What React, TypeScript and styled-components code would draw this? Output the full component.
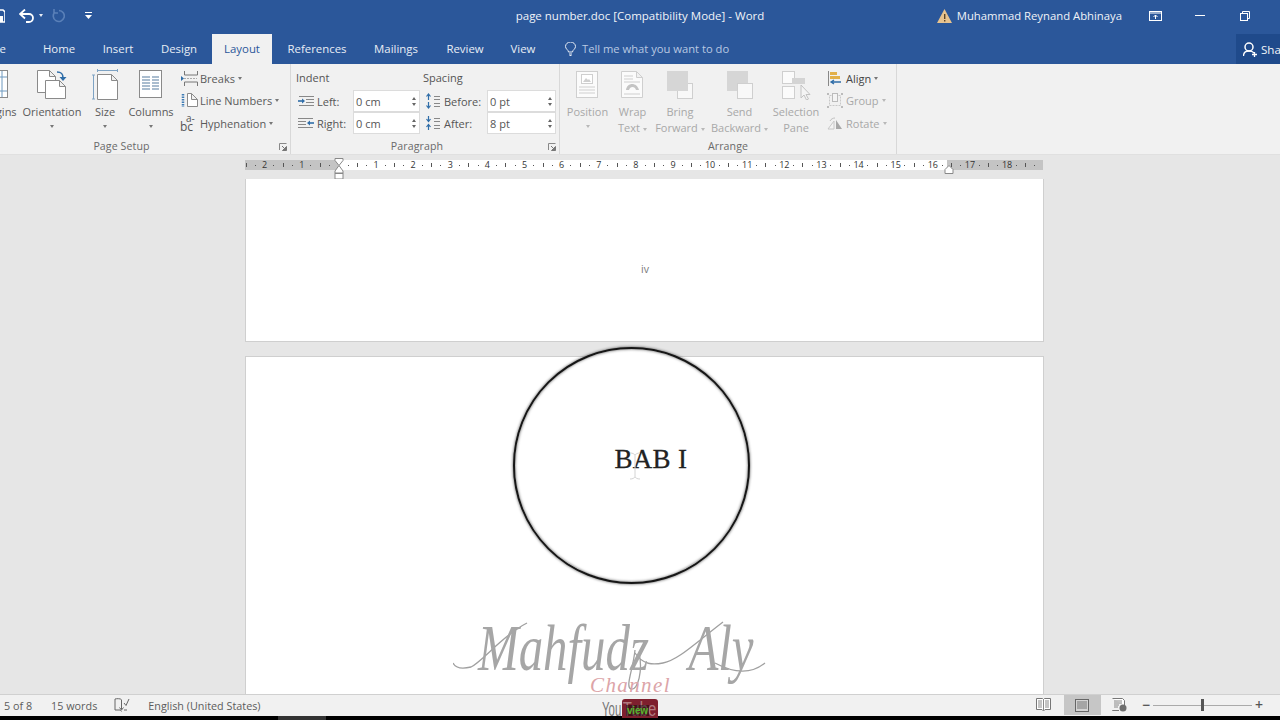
import { ReactNode } from "react";
import styled, { createGlobalStyle } from "styled-components";

const GlobalStyle = createGlobalStyle`
  html, body {
    margin: 0;
    padding: 0;
    width: 1280px;
    height: 720px;
    overflow: hidden;
    background: #000;
    font-family: "Open Sans", "Noto Sans", sans-serif;
  }
  * { box-sizing: border-box; }
`;

const BLUE = "#2b579a";

const Window = styled.div`
  width: 1280px;
  height: 720px;
  display: flex;
  flex-direction: column;
  overflow: hidden;
  position: relative;
`;

/* title bar */
const TitleBar = styled.div`
  height: 34px;
  flex: none;
  background: ${BLUE};
  display: grid;
  grid-template-columns: 1fr auto 1fr;
  align-items: center;
  padding-bottom: 3px;
  color: #fff;
  font-size: 12px;
`;

const QuickAccess = styled.div`
  display: flex;
  align-items: center;
  margin-left: -9px;
`;

const QuickButton = styled.div<{ $w: number; $ml?: number }>`
  width: ${(p) => p.$w}px;
  margin-left: ${(p) => p.$ml ?? 0}px;
  display: flex;
  align-items: center;
  justify-content: center;
`;

const DocTitle = styled.div`
  color: #f0f3f8;
  font-size: 11.5px;
`;

const TitleRight = styled.div`
  display: flex;
  align-items: center;
  justify-content: flex-end;
`;

const UserName = styled.span`
  margin-left: 5px;
  margin-right: 26px;
  font-size: 11.3px;
  color: #f0f3f8;
`;

const WinButton = styled.div<{ $w: number }>`
  width: ${(p) => p.$w}px;
  display: flex;
  justify-content: center;
`;

/* tab row */
const TabRow = styled.div`
  height: 30px;
  flex: none;
  background: ${BLUE};
  display: flex;
  align-items: stretch;
`;

const Tab = styled.div<{ $w: number; $active?: boolean }>`
  width: ${(p) => p.$w}px;
  flex: none;
  display: flex;
  align-items: center;
  justify-content: center;
  font-size: 11.4px;
  padding-bottom: 1px;
  color: ${(p) => (p.$active ? BLUE : "#e8edf5")};
  background: ${(p) => (p.$active ? "#f1f1f1" : "transparent")};
`;

const FileTab = styled(Tab)`
  margin-left: -34px;
`;

const TellMe = styled.div`
  margin-left: 19px;
  display: flex;
  align-items: center;
  gap: 6px;
  font-size: 11.2px;
  padding-bottom: 1px;
  color: #b9c9e2;
`;

const ShareBox = styled.div`
  margin-left: auto;
  width: 44px;
  background: #1f4a8b;
  color: #f0f3f8;
  display: flex;
  align-items: center;
  gap: 4px;
  padding-left: 7px;
  font-size: 11.6px;
  overflow: hidden;
`;

/* ribbon */
const Ribbon = styled.div`
  height: 91px;
  flex: none;
  background: #f1f1f1;
  border-bottom: 1px solid #e0e0e0;
  display: flex;
  color: #555;
  font-size: 11px;
`;

const Group = styled.div<{ $w: number; $ml?: number }>`
  width: ${(p) => p.$w}px;
  margin-left: ${(p) => p.$ml ?? 0}px;
  flex: none;
  height: 90px;
  border-right: 1px solid #d8d8d8;
  display: flex;
  flex-direction: column;
  position: relative;
`;

const GroupBody = styled.div<{ $pl?: number }>`
  flex: 1;
  display: flex;
  min-height: 0;
  padding-left: ${(p) => p.$pl ?? 0}px;
`;

const GroupLabel = styled.div<{ $pr?: number }>`
  height: 15px;
  flex: none;
  text-align: center;
  font-size: 10.6px;
  line-height: 14px;
  letter-spacing: 0.1px;
  padding-right: ${(p) => p.$pr ?? 0}px;
  color: #6a6a6a;
`;

const Launcher = styled.svg`
  position: absolute;
  right: 3px;
  bottom: 3px;
`;

const BigButton = styled.div<{ $w: number; $off?: boolean }>`
  width: ${(p) => p.$w}px;
  flex: none;
  display: flex;
  flex-direction: column;
  align-items: center;
  padding-top: 5px;
  color: ${(p) => (p.$off ? "#a8a8a8" : "#5a5a5a")};
  line-height: 16px;
  white-space: nowrap;
`;

const BigIcon = styled.div`
  height: 32px;
  display: flex;
  align-items: center;
  justify-content: center;
  margin-bottom: 3px;
`;

const Caret = styled.span<{ $off?: boolean; $ml?: number; $color?: string }>`
  display: inline-block;
  flex: none;
  width: 0;
  height: 0;
  border-left: 2.5px solid transparent;
  border-right: 2.5px solid transparent;
  border-top: 3px solid ${(p) => p.$color ?? (p.$off ? "#b8b8b8" : "#777")};
  vertical-align: middle;
  margin-left: ${(p) => p.$ml ?? 3}px;
`;

const CaretRow = styled.div`
  height: 12px;
  display: flex;
  align-items: center;
  justify-content: center;
`;

const SmallColumn = styled.div<{ $ml: number }>`
  margin-left: ${(p) => p.$ml}px;
  display: flex;
  flex-direction: column;
  padding-top: 3px;
`;

const SmallButton = styled.div<{ $off?: boolean; $dark?: boolean }>`
  height: 22.5px;
  display: flex;
  align-items: center;
  gap: 2px;
  white-space: nowrap;
  color: ${(p) => (p.$dark ? "#444" : p.$off ? "#a8a8a8" : "#5a5a5a")};
`;

const SmallIcon = styled.div`
  width: 18px;
  display: flex;
  justify-content: center;
`;

/* paragraph group */
const ParaGrid = styled.div`
  display: grid;
  grid-template-columns: 127px 133px;
  align-content: start;
  padding: 5px 0 0 5px;
`;

const ParaHead = styled.div`
  height: 21px;
  font-size: 11px;
  color: #555;
  line-height: 17px;
`;

const SpinRow = styled.div`
  height: 22px;
  display: flex;
  align-items: center;
  font-size: 11px;
  color: #555;
`;

const SpinLabel = styled.div<{ $w: number }>`
  width: ${(p) => p.$w}px;
  flex: none;
  display: flex;
  align-items: center;
  gap: 3px;
  padding-left: 2px;
`;

const SpinBox = styled.div<{ $w: number }>`
  width: ${(p) => p.$w}px;
  height: 22px;
  flex: none;
  background: #fff;
  border: 1px solid #dcdcdc;
  display: flex;
  align-items: center;
  justify-content: space-between;
  padding: 0 3px 0 2px;
  font-size: 11px;
  color: #555;
`;

const SpinArrows = styled.div`
  display: flex;
  flex-direction: column;
  gap: 3px;
`;

const Arrow = styled.span<{ $down?: boolean }>`
  display: block;
  width: 0;
  height: 0;
  border-left: 2.5px solid transparent;
  border-right: 2.5px solid transparent;
  ${(p) => (p.$down ? "border-top: 3px solid #666;" : "border-bottom: 3px solid #666;")}
`;

/* ruler */
const RulerBand = styled.div`
  height: 24px;
  flex: none;
  background: #e6e6e6;
  padding: 5px 0 0 245px;
`;

const Ruler = styled.div`
  width: 798px;
  height: 10px;
  position: relative;
  background: linear-gradient(
    to right,
    #c4c4c4 0,
    #c4c4c4 93px,
    #fff 93px,
    #fff 702px,
    #c4c4c4 702px
  );
`;

const RulerClip = styled.div`
  width: 100%;
  height: 100%;
  overflow-x: clip;
`;

const RulerStrip = styled.div`
  display: flex;
  height: 100%;
  margin-left: -22.2px;
  width: 900px;
`;

const RulerMark = styled.div`
  width: 9.29px;
  flex: none;
  display: flex;
  align-items: center;
  justify-content: center;
  font-size: 9px;
  color: #333;
  line-height: 10px;
`;

const Tick = styled.span<{ $tall?: boolean }>`
  display: block;
  width: 1px;
  height: ${(p) => (p.$tall ? 4 : 1)}px;
  background: #555;
`;

const IndentMarker = styled.svg`
  position: absolute;
  left: 89px;
  top: -2px;
`;

const RightMarker = styled.svg`
  position: absolute;
  left: 699px;
  top: 5px;
`;

/* document */
const DocArea = styled.div`
  flex: 1;
  min-height: 0;
  background: #e6e6e6;
  display: flex;
  flex-direction: column;
  gap: 14px;
  padding-left: 245px;
  overflow: hidden;
  position: relative;
`;

const PageTop = styled.div`
  flex: none;
  width: 799px;
  height: 163px;
  background: #fff;
  border: 1px solid #cfcfcf;
  border-top: none;
  padding-top: 83px;
  padding-left: 395px;
  font-size: 10.5px;
  line-height: 14px;
  color: #777;
`;

const PageMain = styled.div`
  flex: 1;
  width: 799px;
  background: #fff;
  border: 1px solid #cfcfcf;
  border-bottom: none;
`;

const Circle = styled.div`
  position: absolute;
  left: 513px;
  top: 168px;
  width: 237px;
  height: 237px;
  border-radius: 50%;
  border: 2.5px solid #161616;
  background: #fff;
  box-shadow: 0 0 3px #444, inset 0 0 3px #555;
`;

const ChapterTitle = styled.div`
  margin: 95px 0 0 99.5px;
  font-family: "Liberation Serif", serif;
  font-size: 27px;
  line-height: 30px;
  letter-spacing: 0.3px;
  -webkit-text-stroke: 0.3px #222;
  color: #222;
  white-space: nowrap;
`;

const TextCursor = styled.svg`
  position: absolute;
  left: 114px;
  top: 103px;
`;

const Watermark = styled.div`
  position: absolute;
  left: 453px;
  top: 436px;
  width: 314px;
  height: 80px;
`;

const WatermarkName = styled.div`
  position: absolute;
  left: 25px;
  top: 0;
  font-family: "Liberation Serif", serif;
  font-style: italic;
  font-size: 66px;
  line-height: 66px;
  word-spacing: 38px;
  color: #a6a6a6;
  white-space: nowrap;
  transform: scaleX(0.74);
  transform-origin: left top;
`;

const Swash = styled.svg`
  position: absolute;
  left: 0;
  top: 0;
`;

const WatermarkSub = styled.div`
  position: absolute;
  left: 137px;
  top: 59px;
  font-family: "Liberation Serif", serif;
  font-style: italic;
  font-size: 21px;
  line-height: 22px;
  letter-spacing: 1.4px;
  color: #dca4a8;
`;

/* status bar */
const StatusBar = styled.div`
  height: 22px;
  flex: none;
  background: #f1f1f1;
  border-top: 1px solid #d0d0d0;
  display: flex;
  align-items: center;
  padding-bottom: 1px;
  font-size: 10.8px;
  color: #5c5c5c;
`;

const StatusText = styled.span<{ $ml: number }>`
  margin-left: ${(p) => p.$ml}px;
  white-space: nowrap;
`;

const StatusIcon = styled.div<{ $ml: number; $w: number; $active?: boolean }>`
  margin-left: ${(p) => p.$ml}px;
  width: ${(p) => p.$w}px;
  align-self: stretch;
  display: flex;
  align-items: center;
  justify-content: center;
  background: ${(p) => (p.$active ? "#c6c6c6" : "transparent")};
`;

const ViewGroup = styled.div`
  margin-left: auto;
  display: flex;
  align-self: stretch;
  align-items: center;
`;

const ZoomTrack = styled.div`
  width: 99px;
  height: 1px;
  background: #aaa;
  margin: 0 3px;
  position: relative;
`;

const ZoomThumb = styled.div`
  position: absolute;
  left: 48px;
  top: -6px;
  width: 3px;
  height: 12px;
  background: #555;
`;

const ZoomSign = styled.div<{ $mr?: number; $ml?: number }>`
  font-size: 14px;
  font-weight: 600;
  line-height: 14px;
  color: #555;
  margin-left: ${(p) => p.$ml ?? 0}px;
  margin-right: ${(p) => p.$mr ?? 0}px;
`;

const BottomBand = styled.div`
  height: 4px;
  flex: none;
  background: #000;
  display: flex;
`;

const BandGrey = styled.div`
  margin-left: 278px;
  width: 48px;
  background: #333;
`;

const Logo = styled.div`
  position: absolute;
  left: 602px;
  top: 699px;
  height: 19px;
  overflow: hidden;
  display: flex;
  align-items: flex-start;
  font-family: "Liberation Sans", sans-serif;
  font-size: 20px;
  line-height: 20px;
  color: #777;
`;

const LogoYou = styled.span`
  width: 20px;
  display: block;
  transform: scaleX(0.57);
  transform-origin: left top;
`;

const LogoBox = styled.span`
  position: relative;
  width: 36px;
  height: 19px;
  background: #7e1f2e;
  border-radius: 3px 3px 0 0;
  color: #b07a80;
  overflow: hidden;
`;

const LogoTube = styled.span`
  display: block;
  padding-left: 1px;
  transform: scaleX(0.75);
  transform-origin: left top;
`;

const LogoOver = styled.span`
  position: absolute;
  left: 4px;
  top: 6px;
  padding: 0 1px;
  color: #58b52e;
  background: rgba(0, 0, 0, 0.45);
  font-size: 10px;
  font-weight: 700;
  line-height: 11px;
  letter-spacing: -0.2px;
`;

/* icons */
const G = "#8a8a8a";
const LG = "#cfcfcf";

const PageSheet = ({ x, y, w, h, stroke = G }: { x: number; y: number; w: number; h: number; stroke?: string }) => (
  <path
    d={`M${x} ${y}h${w - 6}l6 6v${h - 6}h-${w}z M${x + w - 6} ${y}v6h6`}
    fill="#fff"
    stroke={stroke}
  />
);

const OrientationIcon = () => (
  <svg width="32" height="32" viewBox="0 0 32 32">
    <PageSheet x={1.5} y={1.5} w={18} h={22} />
    <PageSheet x={9.5} y={11.5} w={20} h={18} />
    <path d="M21 3c4 0 6 1 6 6" fill="none" stroke="#2f6da8" strokeWidth="1.6" />
    <path d="M23.5 8h7l-3.5 4z" fill="#2f6da8" />
  </svg>
);

const SizeIcon = () => (
  <svg width="26" height="32" viewBox="0 0 26 32">
    <path d="M5.5 1.500h20M5.500 0v3M25.500 0v3M1.500 6v24M0 6h3M0 30h3" stroke="#7ea3c4" fill="none" />
    <PageSheet x={5.5} y={5.5} w={20} h={25} />
  </svg>
);

const ColumnsIcon = () => (
  <svg width="24" height="30" viewBox="0 0 24 30">
    <rect x="0.5" y="0.5" width="22" height="27" fill="#fff" stroke={G} />
    <path
      d="M3 7h8M13 7h7M3 10h8M13 10h7M3 13h8M13 13h7M3 16h8M13 16h7M3 19h8M13 19h7"
      stroke="#8fa8c0"
      strokeWidth="1.3"
    />
  </svg>
);

const MarginsIcon = () => (
  <svg width="26" height="30" viewBox="0 0 26 30">
    <rect x="0.5" y="0.5" width="24" height="27" fill="#fff" stroke={G} />
    <path d="M5 1v26M19 1v26M1 7h23M1 21h23" stroke="#6f9ac0" />
  </svg>
);

const BreaksIcon = () => (
  <svg width="17" height="15" viewBox="0 0 17 15">
    <path d="M3.500 0v4h13V0M3.500 15v-4h13v4" fill="none" stroke="#777" />
    <path d="M0 5l3 2.500L0 10z" fill="#2f6da8" />
    <path d="M3 7.500h13" stroke="#aaa" strokeDasharray="2 1" />
  </svg>
);

const LineNumbersIcon = () => (
  <svg width="17" height="15" viewBox="0 0 17 15">
    <PageSheet x={6.5} y={0.5} w={10} h={13} />
    <path d="M2 1v13" stroke="#3f7cb5" strokeWidth="2.5" strokeDasharray="1.5 1" />
  </svg>
);

const HyphenIcon = () => (
  <svg width="18" height="20" viewBox="0 0 18 20">
    <text x="6" y="9" fontSize="10" fill="#555" fontFamily="Open Sans">a-</text>
    <text x="0" y="18" fontSize="12" fill="#555" fontFamily="Open Sans">bc</text>
  </svg>
);

const IndentIcon = ({ right }: { right?: boolean }) => (
  <svg width="16" height="11" viewBox="0 0 16 11">
    <g transform={right ? "translate(16 0) scale(-1 1)" : undefined}>
      <path d="M1 0.500h15M8 3.500h8M8 6.500h8M1 9.500h15" stroke="#888" />
      <path d="M0 5h5" stroke="#2f6da8" strokeWidth="1.6" />
      <path d="M4 2.500l3 2.500l-3 2.500z" fill="#2f6da8" />
    </g>
  </svg>
);

const SpacingIcon = ({ after }: { after?: boolean }) => (
  <svg width="16" height="16" viewBox="0 0 16 16">
    <path d="M9 3.500h6M9 6.500h6M9 10.500h6M9 13.500h6" stroke="#888" />
    <path
      d={after ? "M3.500 1v5M1.500 4l2 2.500l2-2.500M3.500 15v-5M1.500 12l2-2.500l2 2.500" : "M3.500 7V1.500M1.500 3.500l2-2.500l2 2.500M3.500 9v5.500M1.500 12.500l2 2.500l2-2.500"}
      stroke="#2f6da8"
      fill="none"
      strokeWidth="1.2"
    />
  </svg>
);

const PositionIcon = () => (
  <svg width="24" height="28" viewBox="0 0 24 28">
    <rect x="0.5" y="0.5" width="21" height="26" fill="#fbfbfb" stroke={LG} />
    <rect x="5.5" y="3.5" width="11" height="9" fill="#fff" stroke={LG} />
    <path d="M7 11l3-4l2 2l1-1l2 3z" fill={LG} />
    <path d="M3 16h16M3 19h16M3 22h16" stroke={LG} />
  </svg>
);

const WrapIcon = () => (
  <svg width="23" height="28" viewBox="0 0 23 28">
    <path d="M0.500 0.500h15l6 6v20h-21zM15.500 0.500v6h6" fill="#fbfbfb" stroke={LG} />
    <path d="M3 5h9M3 8h9M3 23h16M3 11h16" stroke={LG} />
    <path d="M5 19c1-8 11-8 13 0h-3c-1-4-6-4-7 0z" fill="#c4c4c4" />
  </svg>
);

const LayerIcon = ({ back }: { back?: boolean }) => (
  <svg width="26" height="28" viewBox="0 0 26 28">
    {back ? (
      <>
        <rect x="0" y="0" width="21" height="20" fill="#d6d6d6" />
        <rect x="10.5" y="12.5" width="15" height="15" fill="#f8f8f8" stroke="#cfcfcf" />
      </>
    ) : (
      <>
        <rect x="10.5" y="12.5" width="15" height="15" fill="#f8f8f8" stroke="#cfcfcf" />
        <rect x="0" y="0" width="21" height="20" fill="#d6d6d6" />
      </>
    )}
  </svg>
);

const PaneIcon = () => (
  <svg width="29" height="29" viewBox="0 0 29 29">
    <rect x="0.5" y="0.5" width="12" height="12" fill="#fbfbfb" stroke={LG} />
    <rect x="0.5" y="15.5" width="12" height="12" fill="#fbfbfb" stroke={LG} />
    <rect x="10" y="7" width="13" height="6" fill="#d4d4d4" />
    <path d="M19 14v13l3-3l2.500 5l2-1l-2.500-4.500h4z" fill="#f4f4f4" stroke="#c2c2c2" />
  </svg>
);

const AlignIcon = () => (
  <svg width="16" height="15" viewBox="0 0 16 15">
    <path d="M1.500 0v15" stroke="#888" />
    <rect x="3" y="1" width="7" height="3" fill="#e2b04a" />
    <rect x="3" y="5" width="10" height="3" fill="#e2b04a" />
    <path d="M14 11H5M7 9l-3 2l3 2" fill="none" stroke="#2f6da8" strokeWidth="1.3" />
  </svg>
);

const GroupIcon = () => (
  <svg width="16" height="15" viewBox="0 0 16 15">
    <rect x="2.5" y="2.5" width="11" height="10" fill="none" stroke="#c8c8c8" strokeDasharray="2 1" />
    <rect x="5.5" y="0.5" width="5" height="8" fill="#f4f4f4" stroke="#bbb" />
    <rect x="0" y="0" width="2" height="2" fill="#bbb" />
    <rect x="14" y="0" width="2" height="2" fill="#bbb" />
    <rect x="0" y="13" width="2" height="2" fill="#bbb" />
    <rect x="14" y="13" width="2" height="2" fill="#bbb" />
  </svg>
);

const RotateIcon = () => (
  <svg width="16" height="15" viewBox="0 0 16 15">
    <path d="M7 13H1l6-8z" fill="#f4f4f4" stroke="#c8c8c8" />
    <path d="M9 13h6l-6-9z" fill="#a8a8a8" />
    <path d="M3 5c1-2 3-3 5-3" fill="none" stroke="#c0c0c0" />
  </svg>
);

const LauncherIcon = () => (
  <Launcher width="8" height="8" viewBox="0 0 8 8">
    <path d="M0.500 7V0.500H7.500" fill="none" stroke="#888" />
    <path d="M3 3l3.500 3.500M7.500 3.500v4h-4z" stroke="#777" fill="#777" />
  </Launcher>
);

const ReadIcon = () => (
  <svg width="15" height="14" viewBox="0 0 15 14">
    <path d="M0.500 0.500h6l1 1l1-1h6v11h-5.500l-1.500 1.500l-1.500-1.500h-5.500z" fill="#fff" stroke="#777" />
    <path d="M7.500 1.500v11M2 3h4M2 5h4M2 7h4M2 9h4M9 3h4M9 5h4M9 7h4M9 9h4" stroke="#888" />
  </svg>
);

const PrintIcon = () => (
  <svg width="14" height="13" viewBox="0 0 14 13">
    <rect x="0.5" y="0.5" width="13" height="12" fill="#d4d4d4" stroke="#666" />
    <path d="M2 3h10M2 5h10M2 7h10M2 9h10" stroke="#777" />
  </svg>
);

const WebIcon = () => (
  <svg width="15" height="14" viewBox="0 0 15 14">
    <path d="M0.500 0.500h10l2 2v5M7 12.500H0.500z" fill="#fff" stroke="#777" />
    <path d="M2 3h8M2 5h8M2 7h5M2 9h4" stroke="#888" />
    <circle cx="11" cy="10" r="3.5" fill="#6f6f6f" />
  </svg>
);

const ProofIcon = () => (
  <svg width="16" height="14" viewBox="0 0 16 14">
    <path d="M7.500 1.500C6 0.500 3 0.500 1 1v11h5.500l1 1.500" fill="none" stroke="#666" />
    <path d="M7.500 2v9M5.500 9.500l2 2.500l2-2.500" fill="none" stroke="#666" />
    <path d="M10 5l2 2.500L15 1" fill="none" stroke="#666" />
    <path d="M10 12h3" stroke="#666" />
  </svg>
);

const rulerNumbers = [3, 2, 1, 0, ...Array.from({ length: 18 }, (_, i) => i + 1), -1];

const RulerCell = ({ n }: { n: number }) => (
  <>
    <RulerMark>{n > 0 ? n : null}</RulerMark>
    <RulerMark>
      <Tick />
    </RulerMark>
    <RulerMark>
      <Tick $tall />
    </RulerMark>
    <RulerMark>
      <Tick />
    </RulerMark>
  </>
);

const Spin = ({ value, w }: { value: string; w: number }) => (
  <SpinBox $w={w}>
    {value}
    <SpinArrows>
      <Arrow />
      <Arrow $down />
    </SpinArrows>
  </SpinBox>
);

const Big = ({
  w,
  icon,
  lines,
  off,
  caretInline,
  caretBelow,
}: {
  w: number;
  icon: ReactNode;
  lines: string[];
  off?: boolean;
  caretInline?: boolean;
  caretBelow?: boolean;
}) => (
  <BigButton $w={w} $off={off}>
    <BigIcon>{icon}</BigIcon>
    {lines.map((line, i) => (
      <div key={line}>
        {line}
        {caretInline && i === lines.length - 1 && <Caret $off={off} />}
      </div>
    ))}
    {caretBelow && (
      <CaretRow>
        <Caret $off={off} $ml={0} />
      </CaretRow>
    )}
  </BigButton>
);

export default function App() {
  return (
    <Window>
      <GlobalStyle />
      <TitleBar>
        <QuickAccess>
          <QuickButton $w={16}>
            <svg width="11" height="14" viewBox="0 0 11 14">
              <path d="M0 1h9l2 2v10H0z" fill="none" stroke="#fff" strokeWidth="1.6" />
              <rect x="2" y="7" width="7" height="6" fill="#fff" />
            </svg>
          </QuickButton>
          <QuickButton $w={24} $ml={8}>
            <svg width="16" height="14" viewBox="0 0 16 14">
              <path d="M2 5h8a4 4 0 0 1 0 8H7" fill="none" stroke="#fff" strokeWidth="1.8" />
              <path d="M6 0.500L1 5l5 4.500" fill="none" stroke="#fff" strokeWidth="1.8" />
            </svg>
          </QuickButton>
          <Caret $ml={0} $color="#e8edf5" />
          <QuickButton $w={30}>
            <svg width="14" height="14" viewBox="0 0 14 14">
              <path d="M4 3a5.500 5.500 0 1 0 4-1.500M3 0v4h4" fill="none" stroke="#5a80b8" strokeWidth="1.6" />
            </svg>
          </QuickButton>
          <QuickButton $w={30}>
            <svg width="7" height="7" viewBox="0 0 7 7">
              <path d="M0 0h7v1H0zM0 3h7L3.500 7z" fill="#fff" />
            </svg>
          </QuickButton>
        </QuickAccess>
        <DocTitle>page number.doc [Compatibility Mode] - Word</DocTitle>
        <TitleRight>
          <svg width="15" height="14" viewBox="0 0 15 14">
            <path d="M7.500 0L15 14H0z" fill="#e8c38e" />
            <path d="M7 5h1.400v5H7zM7 11h1.400v1.500H7z" fill="#5a4326" />
          </svg>
          <UserName>Muhammad Reynand Abhinaya</UserName>
          <WinButton $w={14}>
            <svg width="13" height="10" viewBox="0 0 13 10">
              <rect x="0.5" y="0.5" width="12" height="9" fill="none" stroke="#fff" />
              <path d="M0 2h13" stroke="#fff" />
              <path d="M6.500 8V4M4.500 6l2-2l2 2" fill="none" stroke="#fff" />
            </svg>
          </WinButton>
          <WinButton $w={76}>
            <svg width="10" height="1" viewBox="0 0 10 1">
              <rect width="10" height="1" fill="#fff" />
            </svg>
          </WinButton>
          <WinButton $w={14}>
            <svg width="10" height="10" viewBox="0 0 10 10">
              <path d="M2.500 2.500V0.500h7v7h-2" fill="none" stroke="#fff" />
              <rect x="0.5" y="2.5" width="7" height="7" fill="none" stroke="#fff" />
            </svg>
          </WinButton>
          <WinButton $w={28} />
        </TitleRight>
      </TitleBar>

      <TabRow>
        <FileTab $w={62}>File</FileTab>
        <Tab $w={62}>Home</Tab>
        <Tab $w={56}>Insert</Tab>
        <Tab $w={66}>Design</Tab>
        <Tab $w={60} $active>
          Layout
        </Tab>
        <Tab $w={90}>References</Tab>
        <Tab $w={68}>Mailings</Tab>
        <Tab $w={70}>Review</Tab>
        <Tab $w={46}>View</Tab>
        <TellMe>
          <svg width="11" height="14" viewBox="0 0 11 14">
            <path d="M3.500 10c0-2-3-3-3-5.500a5 4.500 0 0 1 10 0c0 2.500-3 3.500-3 5.500zM4 12h3M4.500 13.500h2" fill="none" stroke="#e8edf5" />
          </svg>
          Tell me what you want to do
        </TellMe>
        <ShareBox>
          <svg width="14" height="15" viewBox="0 0 14 15" style={{ flex: "none" }}>
            <circle cx="6" cy="5" r="4" fill="none" stroke="#fff" strokeWidth="1.5" />
            <path d="M0.500 14c0-3 2-5 5.500-5s4 1 5 2M9 12.500h5M11.500 10v5" fill="none" stroke="#fff" strokeWidth="1.3" />
          </svg>
          Share
        </ShareBox>
      </TabRow>

      <Ribbon>
        <Group $w={338} $ml={-47}>
          <GroupBody $pl={17}>
            <Big w={52} icon={<MarginsIcon />} lines={["Margins"]} />
            <Big w={60} icon={<OrientationIcon />} lines={["Orientation"]} caretBelow />
            <Big w={46} icon={<SizeIcon />} lines={["Size"]} caretBelow />
            <Big w={46} icon={<ColumnsIcon />} lines={["Columns"]} caretBelow />
            <SmallColumn $ml={6}>
              <SmallButton>
                <SmallIcon>
                  <BreaksIcon />
                </SmallIcon>
                Breaks
                <Caret $ml={1} />
              </SmallButton>
              <SmallButton>
                <SmallIcon>
                  <LineNumbersIcon />
                </SmallIcon>
                Line Numbers
                <Caret $ml={1} />
              </SmallButton>
              <SmallButton>
                <SmallIcon>
                  <HyphenIcon />
                </SmallIcon>
                Hyphenation
                <Caret $ml={1} />
              </SmallButton>
            </SmallColumn>
          </GroupBody>
          <GroupLabel>Page Setup</GroupLabel>
          <LauncherIcon />
        </Group>

        <Group $w={269}>
          <GroupBody>
            <ParaGrid>
              <ParaHead>Indent</ParaHead>
              <ParaHead>Spacing</ParaHead>
              <SpinRow>
                <SpinLabel $w={57}>
                  <IndentIcon /> Left:
                </SpinLabel>
                <Spin value="0 cm" w={67} />
              </SpinRow>
              <SpinRow>
                <SpinLabel $w={64}>
                  <SpacingIcon /> Before:
                </SpinLabel>
                <Spin value="0 pt" w={69} />
              </SpinRow>
              <SpinRow>
                <SpinLabel $w={57}>
                  <IndentIcon right /> Right:
                </SpinLabel>
                <Spin value="0 cm" w={67} />
              </SpinRow>
              <SpinRow>
                <SpinLabel $w={64}>
                  <SpacingIcon after /> After:
                </SpinLabel>
                <Spin value="8 pt" w={69} />
              </SpinRow>
            </ParaGrid>
          </GroupBody>
          <GroupLabel $pr={16}>Paragraph</GroupLabel>
          <LauncherIcon />
        </Group>

        <Group $w={337}>
          <GroupBody>
            <Big w={55} off icon={<PositionIcon />} lines={["Position"]} caretBelow />
            <Big w={35} off icon={<WrapIcon />} lines={["Wrap", "Text"]} caretInline />
            <Big w={60} off icon={<LayerIcon />} lines={["Bring", "Forward"]} caretInline />
            <Big w={59} off icon={<LayerIcon back />} lines={["Send", "Backward"]} caretInline />
            <Big w={54} off icon={<PaneIcon />} lines={["Selection", "Pane"]} />
            <SmallColumn $ml={3}>
              <SmallButton $dark>
                <SmallIcon>
                  <AlignIcon />
                </SmallIcon>
                Align
                <Caret $ml={1} />
              </SmallButton>
              <SmallButton $off>
                <SmallIcon>
                  <GroupIcon />
                </SmallIcon>
                Group
                <Caret $off $ml={1} />
              </SmallButton>
              <SmallButton $off>
                <SmallIcon>
                  <RotateIcon />
                </SmallIcon>
                Rotate
                <Caret $off $ml={1} />
              </SmallButton>
            </SmallColumn>
          </GroupBody>
          <GroupLabel>Arrange</GroupLabel>
        </Group>
      </Ribbon>

      <RulerBand>
        <Ruler>
          <RulerClip>
            <RulerStrip>
              {rulerNumbers.map((n) => (
                <RulerCell key={n} n={n} />
              ))}
            </RulerStrip>
          </RulerClip>
          <IndentMarker width="11" height="22" viewBox="0 0 11 22">
            <path d="M1 0.500h8v2L5 7.500L1 2.500zM5 7.500l4 5.500v2H1v-2z" fill="#fff" stroke="#888" />
            <rect x="1" y="15.5" width="8" height="5.5" fill="#fff" stroke="#888" />
          </IndentMarker>
          <RightMarker width="10" height="9" viewBox="0 0 10 9">
            <path d="M5 0.500L9 4.500v4H1v-4z" fill="#fff" stroke="#888" />
          </RightMarker>
        </Ruler>
      </RulerBand>

      <DocArea>
        <PageTop>iv</PageTop>
        <PageMain />
        <Circle>
          <ChapterTitle>BAB I</ChapterTitle>
          <TextCursor width="12" height="28" viewBox="0 0 12 28">
            <path d="M1 1c3 0 4 1 5 2c1-1 2-2 5-2M6 3v22M1 27c3 0 4-1 5-2c1 1 2 2 5 2" fill="none" stroke="#d4d4d4" />
          </TextCursor>
        </Circle>
        <Watermark>
          <Swash width="314" height="80" viewBox="0 0 314 80">
            <path
              d="M0 48C3 54 10 54 18 52C30 46 50 20 74 8M182 38C190 50 200 50 210 48C225 45 240 30 270 7M182 35C180 55 172 72 178 74C185 76 190 55 186 38M262 48C275 55 295 62 312 48"
              fill="none"
              stroke="#a0a0a0"
              strokeWidth="1.3"
            />
          </Swash>
          <WatermarkName>Mahfudz Aly</WatermarkName>
          <WatermarkSub>Channel</WatermarkSub>
        </Watermark>
      </DocArea>

      <StatusBar>
        <StatusText $ml={4}>5 of 8</StatusText>
        <StatusText $ml={19}>15 words</StatusText>
        <StatusIcon $ml={15} $w={20}>
          <ProofIcon />
        </StatusIcon>
        <StatusText $ml={16}>English (United States)</StatusText>
        <ViewGroup>
          <StatusIcon $ml={0} $w={26}>
            <ReadIcon />
          </StatusIcon>
          <StatusIcon $ml={7} $w={37} $active>
            <PrintIcon />
          </StatusIcon>
          <StatusIcon $ml={1} $w={36}>
            <WebIcon />
          </StatusIcon>
          <ZoomSign $ml={4}>−</ZoomSign>
          <ZoomTrack>
            <ZoomThumb />
          </ZoomTrack>
          <ZoomSign $mr={17}>+</ZoomSign>
        </ViewGroup>
      </StatusBar>
      <BottomBand>
        <BandGrey />
      </BottomBand>

      <Logo>
        <LogoYou>You</LogoYou>
        <LogoBox>
          <LogoTube>Tube</LogoTube>
          <LogoOver>view</LogoOver>
        </LogoBox>
      </Logo>
    </Window>
  );
}
